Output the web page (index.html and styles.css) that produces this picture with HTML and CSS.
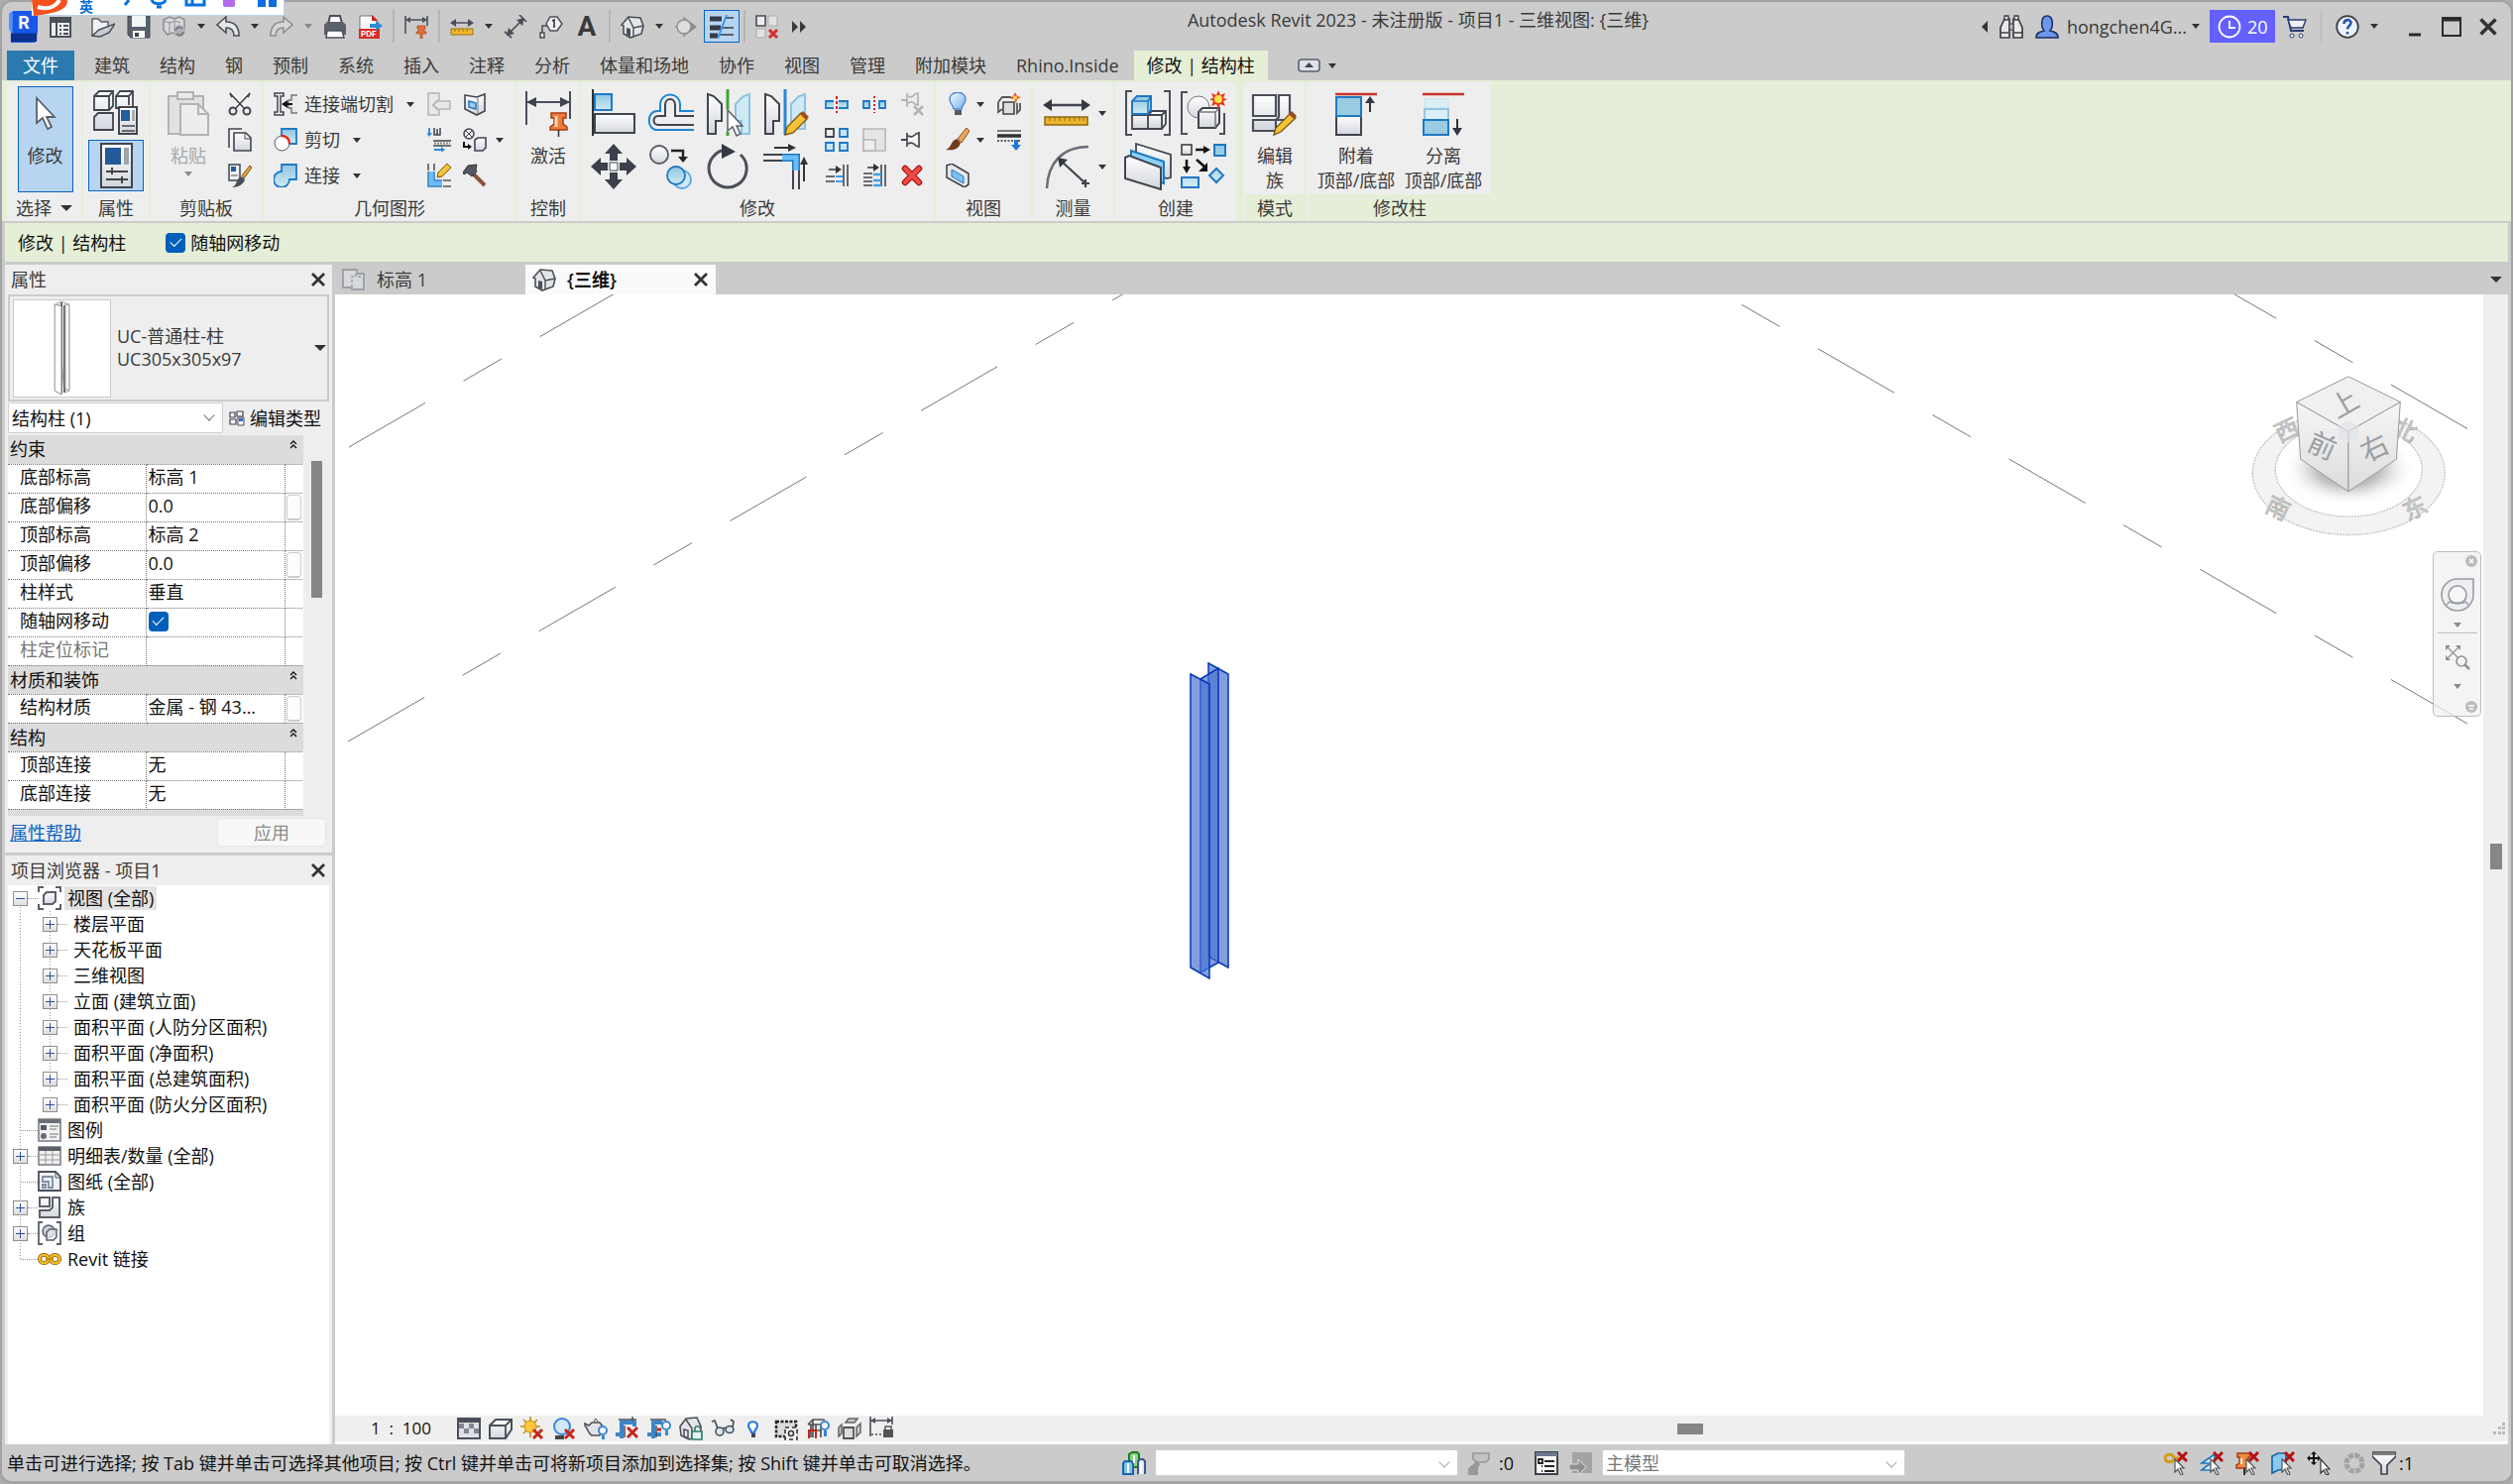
FILE: index.html
```html
<!DOCTYPE html>
<html lang="zh-CN">

<head>
  <meta charset="UTF-8" />
  <meta name="viewport" content="width=device-width, initial-scale=1.0" />
  <title>Autodesk Revit 2023</title>
  <link rel="stylesheet" href="styles.css">
</head>

<body>
  <!-- icon sprite -->
  <svg class="sprite" aria-hidden="true">
    <defs>
      <linearGradient id="gw" x1="0" y1="0" x2="0" y2="1"><stop offset="0" stop-color="#fff"/><stop offset="1" stop-color="#d3d6dd"/></linearGradient>
      <linearGradient id="gb" x1="0" y1="0" x2="0" y2="1"><stop offset="0" stop-color="#8fc6e0"/><stop offset="1" stop-color="#cfe9f5"/></linearGradient>
      <linearGradient id="gl" x1="0" y1="0" x2="1" y2="1"><stop offset="0" stop-color="#fff"/><stop offset="1" stop-color="#6db1ee"/></linearGradient>
    </defs>

    <symbol id="revit" viewBox="0 0 32 34"><path d="M0 3l5-3h26v22l-3 12H2l1-10-3-6z" fill="#1858e8"/><path d="M2 24h28v9H2z" fill="#0b2f8c"/><path d="M0 3l4-3v24l-4-5z" fill="#4f94ff"/></symbol>
    <symbol id="home-win" viewBox="0 0 24 24"><path d="M2 3h20v19H2z" fill="#eceef2" stroke="#4a4f59" stroke-width="2"/><path d="M2 3h20v5H2z" fill="#4a4f59"/><path d="M8 8v14M11 11h2M11 15h2M11 19h2M15 11h5M15 15h5M15 19h5" stroke="#4a4f59" stroke-width="2"/></symbol>
    <symbol id="open" viewBox="0 0 24 24"><path d="M1 21V4h6l3 3h7v4" fill="#f1f2f5" stroke="#5c616b" stroke-width="1.5"/><path d="M1 21l7-6 16-6-6 9-9 4z" fill="#c9ccd3" stroke="#4a4f59" stroke-width="1.5"/></symbol>
    <symbol id="save" viewBox="0 0 24 24"><path d="M1 1h22v22H4l-3-3z" fill="#5a606b" stroke="#3f444e"/><path d="M5 1h14v11H5z" fill="#f3f4f6"/><path d="M6 16h12v7H6z" fill="#fff"/><path d="M8 18h4v4H8z" fill="#3f444e"/></symbol>
    <symbol id="sync" viewBox="0 0 24 24"><path d="M1 5l6-3 5 2 5-2 5 3v9l-5 6-8-2-4 2-4-5z" fill="#d8d9dc" stroke="#8b8e94" stroke-width="1.5"/><path d="M7 7v12M1 6l6 2 6-2 5 2M12 6v9" stroke="#8b8e94" fill="none"/><circle cx="17" cy="16" r="6" fill="#b0b2b6"/><path d="M13 16a4 4 0 017-2M21 17a4 4 0 01-7 2" fill="none" stroke="#7c7f86" stroke-width="2"/></symbol>
    <symbol id="undo" viewBox="0 0 24 24"><path d="M1 10l9-8v5c8 0 13 4 13 14h-5c0-6-3-8-8-8v5z" fill="#e6e7ea" stroke="#4a4f59" stroke-width="1.6"/></symbol>
    <symbol id="redo" viewBox="0 0 24 24"><path d="M23 10l-9-8v5C6 7 1 11 1 21h5c0-6 3-8 8-8v5z" fill="#d6d6d6" stroke="#909090" stroke-width="1.6"/></symbol>
    <symbol id="print" viewBox="0 0 24 24"><path d="M5 9l2-8h10l2 8" fill="#fff" stroke="#4a4f59" stroke-width="2"/><path d="M1 10l3-3h16l3 3v10H1z" fill="#5b616c"/><path d="M4 16l-1 7h18l-2-7z" fill="#fff" stroke="#4a4f59" stroke-width="1.5"/></symbol>
    <symbol id="dim-pin" viewBox="0 0 24 24"><path d="M1 1v18M23 1v10M2 5h20" stroke="#4a4f59" stroke-width="1.6"/><path d="M1 5l5-3v6zM23 5l-5-3v6z" fill="#4a4f59"/><path d="M13 11h8v3h-1v3h2v2h-4v5h-2v-5h-4v-2h2v-3h-1z" fill="#e2703a" stroke="#a8421a" stroke-width=".7"/></symbol>
    <symbol id="ruler" viewBox="0 0 24 24"><path d="M4 8h16" stroke="#4a4f59" stroke-width="1.7"/><path d="M0 8l6-4v8zM24 8l-6-4v8z" fill="#4a4f59"/><path d="M1 14h22v6H1z" fill="#f0b82c" stroke="#9c7416"/><path d="M5 14v3M9 14v3M13 14v3M17 14v3" stroke="#9c7416"/></symbol>
    <symbol id="aligned" viewBox="0 0 24 24"><path d="M5 19L19 5M1 17l7 6M16 0l7 7" stroke="#4a4f59" stroke-width="1.7"/><path d="M3 21l2-8 6 6zM21 3l-8 2 6 6z" fill="#4a4f59"/></symbol>
    <symbol id="tag" viewBox="0 0 24 24"><path d="M3 19v-8h5" fill="none" stroke="#4a4f59" stroke-width="1.6"/><path d="M1 18h4v5H1zM11 2h7l5 7-5 7h-7L7 9z" fill="#f2f2f4" stroke="#4a4f59" stroke-width="1.5"/><path d="M13 6l2-1v8" fill="none" stroke="#333" stroke-width="1.6"/></symbol>
    <symbol id="house" viewBox="0 0 24 24"><path d="M1 10l7-8 12 1 3 8-2 8-11 4-7-4v-8z" fill="#e4e5e8" stroke="#4a4f59" stroke-width="1.6"/><path d="M8 3l5 10v9M13 13l10-2" fill="none" stroke="#4a4f59" stroke-width="1.4"/><path d="M6 13l4 1v8l-4-2z" fill="#4a4f59"/></symbol>
    <symbol id="section" viewBox="0 0 24 24"><path d="M11 3l12 9-12 9z" fill="#8b8b8b"/><circle cx="10" cy="12" r="7" fill="#dedede" stroke="#929292" stroke-width="1.500"/><path d="M10 2v4M10 18v4M1 12h3" stroke="#929292" stroke-width="1.500"/></symbol>
    <symbol id="thin" viewBox="0 0 24 24"><path d="M0 4h12M0 13h11M0 21h8" stroke="#363b45" stroke-width="5"/><path d="M15 3h9M13 13h11M9 20h15" stroke="#363b45" stroke-width="1.600"/><path d="M17 0L8 24" stroke="#3a96f0" stroke-width="2"/></symbol>
    <symbol id="close-hidden" viewBox="0 0 24 24"><path d="M1 1h9v10H1z" fill="#eee" stroke="#4a4f59" stroke-width="1.600"/><path d="M13 1h9v10h-9zM1 14h9v9H1z" fill="#e2e2e2" stroke="#aaa"/><path d="M14 15l8 8M22 15l-8 8" stroke="#d32f2f" stroke-width="3"/></symbol>
    <symbol id="more" viewBox="0 0 24 24"><path d="M5 6l6 6-6 6zM13 6l6 6-6 6z" fill="#3a3a3a"/></symbol>
    <symbol id="binoc" viewBox="0 0 24 24"><path d="M1 23V13l4-9h5v19zM23 23V13l-4-9h-5v19z" fill="#e9e9ea" stroke="#3d3f45" stroke-width="1.700"/><path d="M10 9h4v6h-4z" fill="#b7b8bc" stroke="#3d3f45"/><path d="M1 18h8M15 18h8M5 1h4v4H5zM15 1h4v4h-4z" fill="#ddd" stroke="#3d3f45" stroke-width="1.300"/></symbol>
    <symbol id="user" viewBox="0 0 24 24"><path d="M1 23c0-5 4-6 8-7-3-3-4-15 3-15s6 12 3 15c4 1 8 2 8 7z" fill="#6c97ea" stroke="#1d2f63" stroke-width="1.600"/></symbol>
    <symbol id="clock" viewBox="0 0 24 24"><circle cx="12" cy="12" r="10.500" fill="none" stroke="#fff" stroke-width="1.800"/><path d="M12 6v7h6" fill="none" stroke="#fff" stroke-width="1.800"/></symbol>
    <symbol id="cart" viewBox="0 0 24 24"><path d="M0 2h5l3 14h13" fill="none" stroke="#273a73" stroke-width="2"/><path d="M5 5h18l-3 8H8z" fill="#eef0f6" stroke="#273a73" stroke-width="1.400"/><circle cx="9" cy="21" r="2" fill="#fff" stroke="#273a73"/><circle cx="18" cy="21" r="2" fill="#fff" stroke="#273a73"/></symbol>
    <symbol id="help" viewBox="0 0 24 24"><circle cx="12" cy="12" r="10.800" fill="#eef2fa" stroke="#3d3f45" stroke-width="1.800"/><path d="M8.500 9c0-5 7-5 7-1 0 3-3.500 3-3.500 6.500M12 17v2.500" fill="none" stroke="#2456b8" stroke-width="2.600"/></symbol>
    <symbol id="x" viewBox="0 0 16 16"><path d="M2 2l12 12M14 2L2 14" stroke="#333" stroke-width="2.800"/></symbol>
    <symbol id="max" viewBox="0 0 20 20"><path d="M1 1h18v18H1z" fill="none" stroke="#2b2b2b" stroke-width="2"/><path d="M1 3h18" stroke="#2b2b2b" stroke-width="3"/></symbol>
    <symbol id="min" viewBox="0 0 20 20"><path d="M4 18h12" stroke="#2b2b2b" stroke-width="3"/></symbol>

    <!-- ribbon, large -->
    <symbol id="cursor" viewBox="0 0 48 48"><path d="M15 9v25l6-5 5 11 4-2-5-10h8z" fill="#fff" stroke="#5a6069" stroke-width="1.800"/></symbol>
    <symbol id="types" viewBox="0 0 48 48"><g fill="url(#gw)" stroke="#40454f" stroke-width="1.800"><path d="M2 7l5-5h14v15l-4 4H2zM24 7l4-5h13v17H24zM2 28l4-4h15v17H2z"/><path d="M2 7h15v14M17 7l4-5M24 7h13l4-5M37 7v9" fill="none"/><path d="M27 18h18v27H27z" stroke-width="2"/></g><path d="M29 21h9v11h-9z" fill="#245c9c"/><path d="M40 21h3v11h-3z" fill="#a9adb5"/><path d="M30 37h13M30 42h13" stroke="#444" stroke-width="1.500"/></symbol>
    <symbol id="props" viewBox="0 0 48 48"><path d="M9 2h31v44H9z" fill="url(#gw)" stroke="#40454f" stroke-width="2"/><path d="M13 6h16v17H13z" fill="#235a99"/><path d="M32 6h5v17h-5z" fill="#9ea3ac"/><path d="M14 30h22M14 38h22M20 26v7M30 35v7" stroke="#444" stroke-width="2"/></symbol>
    <symbol id="paste" viewBox="0 0 48 48"><path d="M4 7h35v38H4z" fill="#e1e1e1" stroke="#b3b3b3" stroke-width="2"/><path d="M13 3h16v7H13z" fill="#e8e8e8" stroke="#b3b3b3" stroke-width="2"/><path d="M16 15h18l10 10v21H16z" fill="#ededed" stroke="#b3b3b3" stroke-width="2"/><path d="M34 15v10h10" fill="none" stroke="#b3b3b3" stroke-width="2"/></symbol>
    <symbol id="activate" viewBox="0 0 48 48"><path d="M2 2v34M46 2v28M3 13h42" stroke="#4a4f59" stroke-width="2"/><path d="M2 13l10-5v10zM46 13l-10-5v10z" fill="#3d424d"/><path d="M27 24h15v5h-3v6l4 3v3H26v-3l4-3v-6h-3z" fill="#ef7d3c" stroke="#a63d12" stroke-width="1.500"/><path d="M32 27v11" stroke="#ffd9b8" stroke-width="3"/><path d="M34.500 41v7" stroke="#333" stroke-width="1.500"/></symbol>
    <symbol id="align" viewBox="0 0 48 48"><path d="M3 0v47" stroke="#333" stroke-width="2"/><path d="M5 5h17v16H5z" fill="url(#gb)" stroke="#1f78c4" stroke-width="2"/><path d="M5 25h40v19H5z" fill="url(#gw)" stroke="#40454f" stroke-width="2"/></symbol>
    <symbol id="offset" viewBox="0 0 48 48"><path d="M47 22H33v-6c0-14-20-14-20 0v6h-3C-1 22-1 41 10 41h37" fill="none" stroke="#1f86d4" stroke-width="2"/><path d="M47 27H28V16c0-8-10-8-10 0v11h-7c-6 0-6 9 0 9h36" fill="none" stroke="#40454f" stroke-width="2"/></symbol>
    <symbol id="mirror-pick" viewBox="0 0 48 48"><path d="M3 5l6 2 8 8v17h-6v13H3z" fill="url(#gw)" stroke="#40454f" stroke-width="2"/><path d="M45 5l-6 2-8 8v17h6v13h8z" fill="#cfe9f5" stroke="#8cc4e4" stroke-width="2"/><path d="M23 0v20M23 43v4" stroke="#3fa535" stroke-width="3"/><path d="M23 21v21l5-4 4 9 4-2-4-8h6z" fill="#fff" stroke="#5a6069" stroke-width="1.500"/></symbol>
    <symbol id="mirror-draw" viewBox="0 0 48 48"><path d="M3 5l6 2 8 8v17h-6v13H3z" fill="url(#gw)" stroke="#40454f" stroke-width="2"/><path d="M43 5l-6 2-8 8v17h6v8h8z" fill="#cfe9f5" stroke="#8cc4e4" stroke-width="2"/><path d="M23 0v46" stroke="#2a86dc" stroke-width="3"/><path d="M23 46l2-8 14-14 6 6-14 14z" fill="#f6c336" stroke="#7a5413" stroke-width="1.300"/><path d="M38 25l3-3 6 6-3 3z" fill="#9b4a23"/></symbol>
    <symbol id="move" viewBox="0 0 48 48"><path d="M24 1l9 10h-5v7h-8v-7h-5zM24 47l9-10h-5v-7h-8v7h-5zM1 24l10-9v5h7v8h-7v5zM47 24l-10-9v5h-7v8h7v5z" fill="#3b404b"/><path d="M20 20h8v8h-8z" fill="#fff" stroke="#3b404b"/></symbol>
    <symbol id="copy-lg" viewBox="0 0 48 48"><circle cx="12" cy="12" r="9" fill="url(#gw)" stroke="#555a64" stroke-width="1.800"/><path d="M24 8h12v8" fill="none" stroke="#222" stroke-width="2.500"/><path d="M31 14h10l-5 6z" fill="#222"/><circle cx="35" cy="37" r="9" fill="#cfe9f5" stroke="#5ba8dd" stroke-width="1.800"/><circle cx="29" cy="33" r="9" fill="url(#gb)" stroke="#1f78c4" stroke-width="1.800"/></symbol>
    <symbol id="rotate" viewBox="0 0 48 48"><path d="M36 12a19 19 0 11-13-5" fill="none" stroke="#4a4f59" stroke-width="3"/><path d="M17 1l14 8-14 7z" fill="#333843"/></symbol>
    <symbol id="trim" viewBox="0 0 48 48"><path d="M1 12h20M1 18h20M31 26v21M37 26v21" stroke="#40454f" stroke-width="2"/><path d="M20 15h14v13" fill="none" stroke="#1f78c4" stroke-width="8"/><path d="M20 15h14v13" fill="none" stroke="#6cbcf8" stroke-width="5"/><path d="M12 5h18M42 39V20" stroke="#333" stroke-width="2"/><path d="M26 1l8 4-8 4zM38 22l4-8 4 8z" fill="#333"/></symbol>
    <symbol id="measure" viewBox="0 0 48 48"><path d="M6 16h36" stroke="#40454f" stroke-width="2.500"/><path d="M0 16l9-6v12zM48 16l-9-6v12z" fill="#333843"/><path d="M2 28h43v8H2z" fill="#eeb42c" stroke="#8a6812" stroke-width="1.500"/><path d="M7 28v4M12 28v4M17 28v4M22 28v4M27 28v4M32 28v4M37 28v4M41 28v4" stroke="#8a6812"/></symbol>
    <symbol id="radius" viewBox="0 0 48 48"><path d="M4 46C5 20 20 4 46 4" fill="none" stroke="#6b6f78" stroke-width="2.500"/><path d="M18 18l25 23M43 37v8M39 41h8" stroke="#40454f" stroke-width="2.200"/><path d="M15 15l10 2-8 8z" fill="#333843"/></symbol>
    <symbol id="assembly" viewBox="0 0 48 48"><path d="M8 2H2v44h6M40 2h6v44h-6" fill="none" stroke="#4a4f59" stroke-width="2"/><g fill="url(#gw)" stroke="#40454f" stroke-width="1.800"><path d="M8 26h16v14H8zM24 26l4-4h14v13l-4 5H24z"/><path d="M24 26h14v14M38 26l4-4" fill="none"/></g><path d="M8 12l5-5h14v13l-3 5H8z" fill="url(#gb)" stroke="#1f78c4" stroke-width="2"/><path d="M8 12h16v13M24 12l3-5" fill="none" stroke="#1f78c4" stroke-width="1.500"/></symbol>
    <symbol id="group" viewBox="0 0 48 48"><path d="M8 3H2v42h6M40 45h5V24" fill="none" stroke="#4a4f59" stroke-width="2"/><circle cx="19" cy="18" r="11" fill="url(#gw)" stroke="#777"/><path d="M19 23l4-4h17v15l-4 5H19z" fill="url(#gw)" stroke="#40454f" stroke-width="2"/><path d="M19 23h17v16M36 23l4-4" fill="none" stroke="#777" stroke-width="1.500"/><path d="M39 1l2 5 5-2-2 5 4 1-4 2 2 5-5-2-2 5-2-5-5 2 2-5-4-2 4-1-2-5 5 2z" fill="#e5361c"/><circle cx="39" cy="10" r="4" fill="#ffe14a"/></symbol>
    <symbol id="parts" viewBox="0 0 48 48"><path d="M12 1l35 11v23l-4 1-31-12z" fill="url(#gw)" stroke="#40454f" stroke-width="1.800"/><path d="M7 8l33 11v22L7 29z" fill="#8fd0f5" stroke="#1f78c4" stroke-width="2"/><path d="M1 15l4-2 32 12v22L1 36z" fill="url(#gw)" stroke="#40454f" stroke-width="2"/></symbol>
    <symbol id="similar" viewBox="0 0 48 48"><path d="M2 2h10v10H2z" fill="url(#gw)" stroke="#333" stroke-width="1.500"/><g fill="url(#gb)" stroke="#1f78c4" stroke-width="2"><path d="M35 2h11v11H35zM2 35h17v10H2zM37 26l7 7-7 7-7-7z"/></g><path d="M16 7h9M7 17v8M17 17l8 7" stroke="#111" stroke-width="2.500"/><path d="M24 3l7 4-7 4zM3 24h8l-4 7zM28 20v9h-9z" fill="#111"/></symbol>
    <symbol id="edit-family" viewBox="0 0 48 48"><g fill="url(#gw)" stroke="#4a4f59" stroke-width="2.200"><path d="M2 6h23v21H2zM28 6h11v25H25l3-3zM2 31h23v11H2z"/></g><path d="M23 46l2-7 15-15 5 5-15 14z" fill="#f6c336" stroke="#7a5413" stroke-width="1.300"/><path d="M38 25l3-3 5 5-3 3z" fill="#9b4a23"/></symbol>
    <symbol id="attach" viewBox="0 0 48 48"><path d="M3 5h42" stroke="#c8332b" stroke-width="2.500"/><path d="M4 27h25v19H4z" fill="url(#gw)" stroke="#40454f" stroke-width="2"/><path d="M4 8h25v19H4z" fill="#99cbe2" stroke="#1f78c4" stroke-width="2"/><path d="M38 23V12" stroke="#333" stroke-width="2"/><path d="M33 14l5-7 5 7z" fill="#333843"/></symbol>
    <symbol id="detach" viewBox="0 0 48 48"><path d="M3 5h42" stroke="#c8332b" stroke-width="2.500"/><path d="M5 10h24v9H5z" fill="#dceff7" stroke="#c3e1ef"/><path d="M5 20h24v11H5z" fill="#dceff7" stroke="#7db9dd" stroke-width="1.500"/><path d="M4 31h25v15H4z" fill="#99cbe2" stroke="#1f78c4" stroke-width="2"/><path d="M38 30v10" stroke="#333" stroke-width="2"/><path d="M33 39l5 8 5-8z" fill="#333843"/></symbol>

    <!-- ribbon, small -->
    <symbol id="cut" viewBox="0 0 24 24"><path d="M3 1l13 15M21 1L8 16" stroke="#fff" stroke-width="4"/><path d="M2 1l14 15M22 1L8 16M2 1l2 4M22 1l-2 4" stroke="#40454f" stroke-width="1.800"/><circle cx="5" cy="19" r="3.500" fill="none" stroke="#40454f" stroke-width="2"/><circle cx="19" cy="19" r="3.500" fill="none" stroke="#40454f" stroke-width="2"/></symbol>
    <symbol id="copy" viewBox="0 0 24 24"><path d="M1 20V1h13" fill="#f3f3f3" stroke="#40454f" stroke-width="1.600"/><path d="M6 5h12l5 5v13H6z" fill="url(#gw)" stroke="#40454f" stroke-width="1.600"/><path d="M17 5v6h6" fill="none" stroke="#40454f"/></symbol>
    <symbol id="match" viewBox="0 0 24 24"><path d="M1 1h11v16H1z" fill="#eef0f3" stroke="#40454f" stroke-width="1.500"/><path d="M3 3h5v5H3z" fill="#245c9c"/><path d="M3 12h7" stroke="#555"/><path d="M14 12L22 2l2 2-8 11z" fill="#e3a437" stroke="#7a5413"/><path d="M2 24c8 0 5-8 11-11l4 3c-1 5-8 9-15 8z" fill="#4a4f59"/></symbol>
    <symbol id="cope" viewBox="0 0 24 24"><path d="M1 1h9v3H7v16h3v3H1v-3h3V4H1z" fill="#f5f5f5" stroke="#40454f" stroke-width="1.500"/><path d="M24 3h-6v5h-3v8h3v5h6" fill="#e9eaed" stroke="#777" stroke-width="1.500"/><path d="M11 12h8" stroke="#111" stroke-width="2"/><path d="M8 12l6-4v8z" fill="#111"/></symbol>
    <symbol id="cutgeo" viewBox="0 0 24 24"><path d="M8 1h15v15H8z" fill="url(#gb)" stroke="#1f78c4" stroke-width="1.800"/><circle cx="8.500" cy="15.500" r="7.500" fill="#fff" stroke="#555"/><path d="M8 8a7.500 7.500 0 018 8" fill="none" stroke="#e52620" stroke-width="2.400"/></symbol>
    <symbol id="joingeo" viewBox="0 0 24 24"><path d="M8 1h15v15h-7a8 8 0 11-8-8z" fill="url(#gb)" stroke="#1f78c4" stroke-width="1.800"/></symbol>
    <symbol id="split-g" viewBox="0 0 24 24"><path d="M1 1h11v8h11v8H12v6H1z" fill="#e8e8e8" stroke="#b5b5b5" stroke-width="1.500"/><path d="M11 8l-5 5 5 5" fill="none" stroke="#b5b5b5" stroke-width="2"/></symbol>
    <symbol id="walljoin" viewBox="0 0 24 24"><path d="M2 3l12 2 8-3v17l-8 4-12-6z" fill="url(#gw)" stroke="#40454f" stroke-width="1.600"/><path d="M6 9l7 2v6l-7-2z" fill="#9cd0ec" stroke="#1f78c4" stroke-width="1.500"/><path d="M15 6v16" stroke="#777"/></symbol>
    <symbol id="beam" viewBox="0 0 24 24"><path d="M6 13h18M6 18h18" stroke="#40454f" stroke-width="1.600"/><path d="M2 0v6M7 22h8" stroke="#2a8be0" stroke-width="1.800"/><path d="M-1 5l3 4 3-4zM14 19l4 3-4 3z" fill="#2a8be0"/><path d="M7 0v7h6V0M10 1v6" fill="none" stroke="#40454f" stroke-width="1.500"/><path d="M7 15.500h16" stroke="#888" stroke-width="2" stroke-dasharray="2 1"/></symbol>
    <symbol id="void" viewBox="0 0 24 24"><circle cx="6" cy="6" r="5" fill="#eee" stroke="#40454f" stroke-width="1.500"/><path d="M3 3l6 6M9 3L3 9" stroke="#40454f"/><path d="M12 12l3-2h8v10l-3 3h-8z" fill="url(#gw)" stroke="#40454f" stroke-width="1.600"/><path d="M1 14v5h4" fill="none" stroke="#111" stroke-width="2"/><path d="M5 16l4 3-4 3z" fill="#111"/></symbol>
    <symbol id="wall-edit" viewBox="0 0 24 24"><path d="M1 8v15h14M7 8v9h8" fill="none" stroke="#1f78c4" stroke-width="1.500"/><path d="M4 8v12h11" fill="none" stroke="#6cbcf8" stroke-width="4"/><path d="M1 0v7M7 0v7M16 17h8M16 23h8" stroke="#555" stroke-width="1.600"/><path d="M10 14l1-5 9-9 4 4-9 9z" fill="#f6c336" stroke="#7a5413"/></symbol>
    <symbol id="hammer" viewBox="0 0 24 24"><path d="M9 9l13 13" stroke="#8a5442" stroke-width="4"/><path d="M0 9l5-7 9-1-1 5 1 2-5 5-5-4-3 2z" fill="#525761" stroke="#333" stroke-width="1"/></symbol>
    <symbol id="split" viewBox="0 0 24 24"><path d="M1 9h22v7H1z" fill="url(#gb)" stroke="#1f78c4" stroke-width="1.800"/><path d="M9 8h5v9H9z" fill="#eee"/><path d="M12 4v17" stroke="#d3231b" stroke-width="2" stroke-dasharray="3 2"/></symbol>
    <symbol id="split-gap" viewBox="0 0 24 24"><path d="M1 9h6v7H1zM17 9h6v7h-6z" fill="url(#gb)" stroke="#1f78c4" stroke-width="1.800"/><path d="M12 4v17" stroke="#d3231b" stroke-width="2" stroke-dasharray="2 2"/></symbol>
    <symbol id="unpin" viewBox="0 0 24 24"><path d="M1 8h6" stroke="#b3b3b3" stroke-width="1.800"/><path d="M7 1v14M8 4c4 2 5 0 7-2l3-1v12l-3-1c-2-2-3-3-7-1" fill="none" stroke="#b3b3b3" stroke-width="1.700"/><path d="M14 14l9 9M23 14l-9 9" stroke="#b3b3b3" stroke-width="2.500"/></symbol>
    <symbol id="array" viewBox="0 0 24 24"><path d="M1 1h8v8H1z" fill="#eee" stroke="#40454f" stroke-width="1.800"/><path d="M15 1h8v8h-8zM1 15h8v8H1zM15 15h8v8h-8z" fill="#cbe6f3" stroke="#1f78c4" stroke-width="1.800"/></symbol>
    <symbol id="scale" viewBox="0 0 24 24"><path d="M1 1h22v22H1z" fill="#e5e5e5" stroke="#b7b7b7" stroke-width="1.600"/><path d="M1 12h12v11H1z" fill="#eee" stroke="#b7b7b7" stroke-width="1.600"/></symbol>
    <symbol id="pin" viewBox="0 0 24 24"><path d="M1 12h6" stroke="#40454f" stroke-width="1.800"/><path d="M7 5v14M8 8c4 2 6 0 8-2l3-1v14l-3-1c-2-2-4-4-8-2" fill="#f4f4f4" stroke="#40454f" stroke-width="1.700"/></symbol>
    <symbol id="trim1" viewBox="0 0 24 24"><path d="M1 13h9M1 18h9M19 1v22M23 1v22" stroke="#40454f" stroke-width="1.600"/><path d="M11 13h7M11 18h7" stroke="#3ba0f0" stroke-width="2"/><path d="M4 6h8" stroke="#333" stroke-width="1.500"/><path d="M11 2l6 4-6 4z" fill="#333"/></symbol>
    <symbol id="trim2" viewBox="0 0 24 24"><path d="M1 10h9M1 14h9M1 18h9M1 22h9M19 1v22M23 1v22" stroke="#40454f" stroke-width="1.600"/><path d="M11 11h8M11 17h8M11 22h8" stroke="#3ba0f0" stroke-width="2.500"/><path d="M5 4h6" stroke="#333" stroke-width="1.500"/><path d="M11 0l6 4-6 4z" fill="#333"/></symbol>
    <symbol id="delete" viewBox="0 0 24 24"><path d="M5 5l14 14M19 5L5 19" stroke="#a91717" stroke-width="6.500" stroke-linecap="round"/><path d="M5 5l14 14M19 5L5 19" stroke="#ee4b45" stroke-width="4" stroke-linecap="round"/></symbol>
    <symbol id="bulb" viewBox="0 0 24 24"><path d="M8 17c0-4-4-5-4-10C4-2 20-2 20 7c0 5-4 6-4 10z" fill="url(#gl)" stroke="#4f84cf" stroke-width="1.400"/><path d="M9 18h7v5H9z" fill="#555b66"/></symbol>
    <symbol id="displace" viewBox="0 0 24 24"><path d="M6 10h11v12H6z" fill="#ddd" stroke="#444" stroke-width="1.600"/><path d="M1 10l4-5h9M1 10v10l4-3M20 11v10l3-3v-7" fill="none" stroke="#555" stroke-width="1.800"/><path d="M18 0l2 4 4 1-4 2-1 4-2-4-5-1 4-2z" fill="#f04a1c"/><circle cx="18" cy="5.500" r="2" fill="#ffe14a"/></symbol>
    <symbol id="brush" viewBox="0 0 24 24"><path d="M12 11l9-11 3 3-8 12z" fill="#e8a75a" stroke="#8a4f1f"/><path d="M0 22c6-2 5-9 11-11l4 4c-2 7-8 8-15 7z" fill="#713a1a"/></symbol>
    <symbol id="linework" viewBox="0 0 24 24"><path d="M0 3h24" stroke="#555" stroke-width="1.500"/><path d="M0 8h24" stroke="#333" stroke-width="3.500"/><path d="M0 13h24" stroke="#333" stroke-width="1.500" stroke-dasharray="2 1.500"/><path d="M17 12h4v5h3l-5 6-5-6h3z" fill="#1f78d4"/></symbol>
    <symbol id="selbox" viewBox="0 0 24 24"><path d="M1 2l5-2 17 10v11l-4 3L1 14z" fill="#e7e7e9" stroke="#40454f" stroke-width="1.600"/><path d="M6 6l12 7v7L6 13z" fill="#7bc1f2" stroke="#1f78c4"/></symbol>
    <symbol id="ribbon-min" viewBox="0 0 24 16"><rect x="1" y="2" width="21" height="12" rx="3" fill="#dfe1e8" stroke="#5b5f69" stroke-width="1.600"/><path d="M7 10l4.500-5 4.500 5z" fill="#40454f"/></symbol>

    <!-- palettes -->
    <symbol id="edit-type" viewBox="0 0 16 16"><path d="M1 2h5v5H1zM8 1h6v5H8zM1 9h6v5H1z" fill="#f5f5f7" stroke="#40454f" stroke-width="1.200"/><path d="M9 7h6v8H9z" fill="#fff" stroke="#40454f"/><path d="M10 8h4v3h-4z" fill="#2f72bd"/></symbol>
    <symbol id="thumb-col" viewBox="0 0 20 98"><path d="M4 3l5-2 8 3v89l-5 2z" fill="#ededed" stroke="#aaa"/><path d="M9 2v94M12 5v90" stroke="#666" stroke-width="2"/><path d="M2 4l7 2v91l-7-4z" fill="#fff" stroke="#888"/><path d="M13 4l4 1v88l-4-2z" fill="#fff" stroke="#999"/></symbol>
    <symbol id="collapse" viewBox="0 0 8 10"><path d="M1 5l3-3 3 3M1 9l3-3 3 3" fill="none" stroke="#111" stroke-width="1.300"/></symbol>
    <symbol id="t-views" viewBox="0 0 24 24"><path d="M1 6V1h5M18 1h5v5M23 18v5h-5M6 23H1v-5" fill="none" stroke="#5b5f69" stroke-width="2"/><path d="M6 9l3-3h9v9l-3 3H6z" fill="url(#gw)" stroke="#5b5f69" stroke-width="2"/></symbol>
    <symbol id="t-legend" viewBox="0 0 24 24"><path d="M1 1h22v22H1z" fill="#f1f1f3" stroke="#777b84" stroke-width="1.600"/><path d="M1 1h22v4H1z" fill="#6c7079"/><path d="M3 7h6v5H3z" fill="#555a66"/><circle cx="6" cy="18" r="3" fill="#666b76"/><path d="M12 8h9M12 11h7M12 16h9M12 19h7" stroke="#777"/></symbol>
    <symbol id="t-sched" viewBox="0 0 24 24"><path d="M1 3h22v18H1z" fill="#f1f1f3" stroke="#777b84" stroke-width="1.500"/><path d="M1 3h22v4H1z" fill="#5b5f69"/><path d="M1 11h22M1 16h22M8 7v14M15 7v14" stroke="#999"/></symbol>
    <symbol id="t-sheet" viewBox="0 0 24 24"><path d="M1 2h17l5 5v14H1z" fill="#eef0f3" stroke="#4a4f59" stroke-width="1.800"/><path d="M5 7h10v11h-4v-6H5zM5 15h3v3H5z" fill="none" stroke="#7c8fa5" stroke-width="1.800"/><path d="M18 2v6h5" fill="none" stroke="#4a4f59"/></symbol>
    <symbol id="t-family" viewBox="0 0 24 24"><path d="M2 2h10v9H2zM15 2h7v20H2v-7h10l3-3z" fill="url(#gw)" stroke="#5b5f69" stroke-width="2"/></symbol>
    <symbol id="t-group" viewBox="0 0 24 24"><path d="M5 1H1v22h4M19 1h4v22h-4" fill="none" stroke="#5b5f69" stroke-width="1.800"/><circle cx="11" cy="10" r="6" fill="#cdd3dd" stroke="#5b5f69" stroke-width="1.500"/><path d="M9 11l3-3h7v8l-3 3H9z" fill="#e3e6ee" fill-opacity=".8" stroke="#5b5f69" stroke-width="1.500"/></symbol>
    <symbol id="t-link" viewBox="0 0 24 24"><rect x="2" y="8" width="9" height="8" rx="4" fill="none" stroke="#8a6208" stroke-width="4"/><rect x="13" y="8" width="9" height="8" rx="4" fill="none" stroke="#8a6208" stroke-width="4"/><rect x="2" y="8" width="9" height="8" rx="4" fill="none" stroke="#f2bd2c" stroke-width="2.400"/><rect x="13" y="8" width="9" height="8" rx="4" fill="none" stroke="#f2bd2c" stroke-width="2.400"/><path d="M8 12h8" stroke="#c48c12" stroke-width="2.500"/></symbol>
    <symbol id="plan" viewBox="0 0 24 24"><path d="M1 2h14v4h7v16H10v-2H1z" fill="#d6d8dc" stroke="#9a9ea6" stroke-width="1.800"/><path d="M10 20V9h4V6M16 9h6" fill="none" stroke="#9a9ea6" stroke-width="1.500" stroke-dasharray="3 2"/></symbol>

    <!-- view control bar -->
    <symbol id="v-detail" viewBox="0 0 24 24"><path d="M1 2h22v20H1z" fill="#dfe1e5" stroke="#4a4f59" stroke-width="2"/><path d="M1 2h22v4H1z" fill="#4a4f59"/><path d="M2 7h5v5H2zM12 7h5v5h-5zM7 12h5v5H7zM17 12h5v5h-5z" fill="#82868f"/></symbol>
    <symbol id="v-style" viewBox="0 0 24 24"><path d="M1 9l6-6h16v10l-6 9H1z" fill="url(#gw)" stroke="#4a4f59" stroke-width="2"/><path d="M1 9h16v13M17 9l6-6" fill="none" stroke="#4a4f59" stroke-width="1.800"/></symbol>
    <symbol id="v-sun" viewBox="0 0 24 24"><path d="M10 0v21M0 10h20M3 3l14 14M17 3L3 17" stroke="#c98a12" stroke-width="1.600"/><circle cx="10" cy="10" r="6" fill="#ffc83a" stroke="#c98a12"/><path d="M13 13l9 9M22 13l-9 9" stroke="#c5261d" stroke-width="3"/></symbol>
    <symbol id="v-shadow" viewBox="0 0 24 24"><circle cx="10" cy="10" r="8" fill="#cfe6fb" stroke="#3a86d8" stroke-width="2"/><path d="M3 21h9" stroke="#444" stroke-width="4"/><path d="M13 13l9 9M22 13l-9 9" stroke="#c5261d" stroke-width="3"/></symbol>
    <symbol id="v-render" viewBox="0 0 24 24"><path d="M1 7l4 2 3-3h8l3 4-3 9H8C4 17 4 12 1 9z" fill="#e1e3e6" stroke="#4a4f59" stroke-width="1.600"/><path d="M10 5l2-3 2 3" stroke="#4a4f59" fill="none"/><circle cx="19" cy="14" r="4" fill="#fff" stroke="#3a86d8" stroke-width="2"/><path d="M18 19h3v4h-3z" fill="#3a86d8"/></symbol>
    <symbol id="v-crop" viewBox="0 0 24 24"><path d="M6 22V6h13v4M0 18h8" fill="none" stroke="#3a86c8" stroke-width="4"/><path d="M3 3h18M9 9v12M17 0v4" stroke="#4a4f59" stroke-width="1.500"/><path d="M12 11l10 10M22 11L12 21" stroke="#c5261d" stroke-width="3"/></symbol>
    <symbol id="v-cropshow" viewBox="0 0 24 24"><path d="M6 22V6h9M0 18h14" fill="none" stroke="#3a86c8" stroke-width="4"/><path d="M3 3h16M9 9v12" stroke="#4a4f59" stroke-width="1.500"/><circle cx="19" cy="9" r="4" fill="#fff" stroke="#3a86d8" stroke-width="2"/><path d="M18 14h3v5h-3z" fill="#3a86d8"/><path d="M10 13h4" stroke="#c5261d" stroke-width="3"/></symbol>
    <symbol id="v-lock" viewBox="0 0 24 24"><path d="M1 10l6-8 11-1 4 9v9l-12 4-8-4z" fill="#e4e5e8" stroke="#4a4f59" stroke-width="1.600"/><path d="M7 3l6 9v10M5 13l4 1v8l-4-2z" fill="none" stroke="#4a4f59" stroke-width="1.500"/><path d="M13 15h10v8H13z" fill="#e5f5ef" stroke="#2e7e6c" stroke-width="1.600"/><path d="M16 15v-3c0-3 5-3 5 0" fill="none" stroke="#2e7e6c" stroke-width="1.600"/></symbol>
    <symbol id="v-glasses" viewBox="0 0 24 24"><path d="M1 5l3-1 3 8M20 3l3 2-1 6M12 13c1-2 2-2 3-1" fill="none" stroke="#4a4f59" stroke-width="1.700"/><ellipse cx="9" cy="15" rx="4" ry="4" fill="#cfeaf2" stroke="#4a4f59" stroke-width="1.600"/><ellipse cx="19" cy="13" rx="4" ry="3.500" fill="#cfeaf2" stroke="#4a4f59" stroke-width="1.600"/></symbol>
    <symbol id="v-bulb" viewBox="0 0 24 24"><path d="M9 16c0-3-3-3-3-7 0-5 9-5 9 0 0 4-3 4-3 7z" fill="#fff" stroke="#2a7be0" stroke-width="2.200"/><path d="M9 17h4v4H9z" fill="#445"/></symbol>
    <symbol id="v-reveal" viewBox="0 0 24 24"><path d="M2 5h20v15H2z" fill="#dcdcdc" stroke="#222" stroke-width="2.500" stroke-dasharray="3 1.500"/><path d="M11 11h12v12H11z" fill="#f2f2f2" stroke="#333" stroke-width="1.600" stroke-dasharray="4 3"/><circle cx="17" cy="17" r="2.500" fill="#fff" stroke="#333" stroke-width="1.500"/></symbol>
    <symbol id="v-analytic" viewBox="0 0 24 24"><path d="M2 8l5-5h12M2 8h14M5 8v13M10 8v13M15 8v13M2 14h14M7 3v18" fill="none" stroke="#555" stroke-width="1.700"/><path d="M3 22v-8h7v8" fill="none" stroke="#c5261d" stroke-width="2"/><circle cx="19" cy="9" r="4" fill="#fff" stroke="#3a86d8" stroke-width="2"/><path d="M18 14h3v6h-3z" fill="#3a86d8"/></symbol>
    <symbol id="v-displace" viewBox="0 0 24 24"><path d="M6 11h10v11H6z" fill="#ddd" stroke="#555" stroke-width="1.800"/><path d="M8 6l3-4h9l-3 4zM1 11l3-3v9l-3 3zM19 11l4-4v9l-4 4z" fill="#c9c9cb" stroke="#666" stroke-width="1.500"/></symbol>
    <symbol id="v-constraint" viewBox="0 0 24 24"><path d="M1 0v20M23 0v8M1 4h22" stroke="#4a4f59" stroke-width="1.600"/><path d="M1 4l5-3v6zM23 4l-5-3v6z" fill="#4a4f59"/><path d="M2 18h11" stroke="#777" stroke-dasharray="2 2" stroke-width="2"/><path d="M14 13h10v8H14z" fill="#555"/><path d="M16 13v-3h6v3" fill="none" stroke="#555" stroke-width="1.500"/></symbol>

    <!-- status bar -->
    <symbol id="s-worksets" viewBox="0 0 24 24"><path d="M7 16V3l3-2h5l2 2v13z" fill="#8fd08a" stroke="#1d7a1d" stroke-width="2"/><path d="M1 23V12l2-2h6l2 2v11z" fill="#7fc0ee" stroke="#1468b0" stroke-width="2"/><path d="M16 23V10l2-2h3l2 2v13" fill="#dfe5f0" stroke="#3d5a8c" stroke-width="2"/><path d="M12 4v8M6 12v10M19 11v12" stroke="#fff" stroke-width="2"/></symbol>
    <symbol id="s-edit" viewBox="0 0 24 24"><path d="M6 2h16v6l-3 3h-9L6 8z" fill="#c2c2c2" stroke="#999" stroke-width="1.600"/><path d="M1 24v-7l5-4 3-3 4 3-2 4v7z" fill="#999"/></symbol>
    <symbol id="s-options" viewBox="0 0 24 24"><path d="M1 1h22v22H1z" fill="#fafafa" stroke="#3c4250" stroke-width="2"/><path d="M1 1h22v4H1z" fill="#6e7690"/><path d="M4 8h4v4H4zM10 10h10M10 15h10M10 20h10M7 15h1M7 20h1" fill="none" stroke="#222" stroke-width="1.800"/></symbol>
    <symbol id="s-into" viewBox="0 0 24 24"><path d="M3 1h20v21H3z" fill="#a3a3a3"/><path d="M0 13h9V8l8 8-8 8v-5H0z" fill="#8f8f8f" stroke="#ddd"/></symbol>
    <symbol id="s-x" viewBox="0 0 24 24"><path d="M14 1l9 9M23 1l-9 9" stroke="#b51212" stroke-width="3"/><path d="M11 8v13l3-3 3 6 2-1-3-6h4z" fill="#fff" stroke="#555" stroke-width="1.200"/></symbol>
    <symbol id="s-link" viewBox="0 0 24 24"><path d="M1 7c0-5 9-5 9 0s-9 5-9 0zM10 7h10" fill="none" stroke="#d29b18" stroke-width="3"/><use href="#s-x"/></symbol>
    <symbol id="s-under" viewBox="0 0 24 24"><path d="M2 12L15 3v9zM2 19l6-5h8v5z" fill="#dff0fa" stroke="#1f78c4" stroke-width="1.700"/><use href="#s-x"/></symbol>
    <symbol id="s-pinned" viewBox="0 0 24 24"><path d="M2 2h13v4h-2v6l3 2v3H1v-3l3-2V6H2z" fill="#ef8a43" stroke="#a63d12" stroke-width="1.500"/><path d="M6 7v6" stroke="#ffe2c4" stroke-width="2.500"/><path d="M9 17v7" stroke="#333" stroke-width="2"/><use href="#s-x"/></symbol>
    <symbol id="s-face" viewBox="0 0 24 24"><path d="M1 5l6-3h8v16l-8 1-6 3z" fill="#8cc9ee" stroke="#1468b0" stroke-width="1.700"/><use href="#s-x"/></symbol>
    <symbol id="s-drag" viewBox="0 0 24 24"><path d="M7 1v12M1 7h12" stroke="#111" stroke-width="2"/><path d="M7 0l3 3H4zM7 14l3-3H4zM0 7l3-3v6zM14 7l-3-3v6z" fill="#111"/><path d="M14 8v14l3-3 3 5 2-1-3-5h4z" fill="#fff" stroke="#333" stroke-width="1.200"/></symbol>
    <symbol id="s-gear" viewBox="0 0 24 24"><circle cx="12" cy="12" r="8" fill="none" stroke="#a2a2a2" stroke-width="5" stroke-dasharray="5 1.280"/></symbol>
    <symbol id="s-filter" viewBox="0 0 24 24"><path d="M0 1h24v4l-9 9v9H9v-9L0 5z" fill="url(#gw)" stroke="#40454f" stroke-width="1.700"/><path d="M1 3h22" stroke="#555" stroke-width="1.500"/></symbol>
  </svg>

  <div class="app">
    <header class="titlebar">
      <nav class="qat">
        <button class="logo" aria-label="Revit"><svg><use href="#revit"/></svg><span>R</span></button>
        <button class="tool home" aria-label="主页"><svg class="ic"><use href="#home-win"/></svg></button>
        <button class="tool" aria-label="打开"><svg class="ic"><use href="#open"/></svg></button>
        <button class="tool" aria-label="保存"><svg class="ic"><use href="#save"/></svg></button>
        <button class="tool" aria-label="同步"><svg class="ic"><use href="#sync"/></svg></button>
        <i class="caret"></i>
        <button class="tool" aria-label="放弃"><svg class="ic"><use href="#undo"/></svg></button>
        <i class="caret"></i>
        <button class="tool" aria-label="重做"><svg class="ic"><use href="#redo"/></svg></button>
        <i class="caret dim"></i>
        <button class="tool" aria-label="打印"><svg class="ic"><use href="#print"/></svg></button>
        <button class="tool" aria-label="导出"><svg class="ic" viewBox="0 0 24 24"><path d="M1 1h13l5 5v17H1z" fill="#fafafa" stroke="#777"/><path d="M13 0v6h6z" fill="#d3231b"/><path d="M0 14h21v10H0z" fill="#d92b22"/><text class="pdf" x="2" y="22">PDF</text><path d="M11 9h6V6l7 5-7 5v-3h-6z" fill="#2e8bd3"/></svg></button>
        <i class="sep"></i>
        <button class="tool" aria-label="控制"><svg class="ic"><use href="#dim-pin"/></svg></button>
        <i class="sep"></i>
        <button class="tool" aria-label="测量"><svg class="ic"><use href="#ruler"/></svg></button>
        <i class="caret"></i>
        <button class="tool" aria-label="对齐标注"><svg class="ic"><use href="#aligned"/></svg></button>
        <button class="tool" aria-label="标记"><svg class="ic"><use href="#tag"/></svg></button>
        <button class="tool letter">A</button>
        <i class="sep"></i>
        <button class="tool" aria-label="三维"><svg class="ic"><use href="#house"/></svg></button>
        <i class="caret"></i>
        <button class="tool" aria-label="剖面"><svg class="ic"><use href="#section"/></svg></button>
        <button class="tool pressed" aria-label="细线"><svg class="ic"><use href="#thin"/></svg></button>
        <i class="sep"></i>
        <button class="tool" aria-label="关闭非活动视图"><svg class="ic"><use href="#close-hidden"/></svg></button>
        <button class="tool more" aria-label="更多"><svg class="ic"><use href="#more"/></svg></button>
      </nav>
      <h1 class="title">Autodesk Revit 2023 - 未注册版 - 项目1 - 三维视图: {三维}</h1>
      <div class="account">
        <i class="caret left"></i>
        <button class="tool" aria-label="搜索"><svg class="ic"><use href="#binoc"/></svg></button>
        <button class="tool" aria-label="用户"><svg class="ic"><use href="#user"/></svg></button>
        <span class="user-name">hongchen4G...</span>
        <i class="caret"></i>
        <button class="trial"><svg class="ic"><use href="#clock"/></svg>20</button>
        <button class="tool" aria-label="商店"><svg class="ic"><use href="#cart"/></svg></button>
        <i class="sep wide"></i>
        <button class="tool" aria-label="帮助"><svg class="ic"><use href="#help"/></svg></button>
        <i class="caret"></i>
        <div class="window-buttons">
          <button aria-label="最小化"><svg class="ic20"><use href="#min"/></svg></button>
          <button aria-label="最大化"><svg class="ic20"><use href="#max"/></svg></button>
          <button aria-label="关闭"><svg class="ic20"><use href="#x"/></svg></button>
        </div>
      </div>
    </header>

    <nav class="tabs">
      <a class="file" href="#">文件</a>
      <a href="#">建筑</a>
      <a href="#">结构</a>
      <a href="#">钢</a>
      <a href="#">预制</a>
      <a href="#">系统</a>
      <a href="#">插入</a>
      <a href="#">注释</a>
      <a href="#">分析</a>
      <a href="#">体量和场地</a>
      <a href="#">协作</a>
      <a href="#">视图</a>
      <a href="#">管理</a>
      <a href="#">附加模块</a>
      <a href="#">Rhino.Inside</a>
      <a class="active" href="#">修改 | 结构柱</a>
      <button class="ribbon-state" aria-label="最小化功能区"><svg><use href="#ribbon-min"/></svg><i class="caret"></i></button>
    </nav>

    <section class="ribbon">
      <div class="panel p-select">
        <div class="body">
          <button class="big pressed"><svg class="lg"><use href="#cursor"/></svg>修改</button>
        </div>
        <h2>选择 <i class="caret large"></i></h2>
      </div>
      <div class="panel p-props">
        <div class="body">
          <button aria-label="类型属性"><svg class="lg"><use href="#types"/></svg></button>
          <button class="pressed" aria-label="属性"><svg class="lg"><use href="#props"/></svg></button>
        </div>
        <h2>属性</h2>
      </div>
      <div class="panel p-clip">
        <div class="body">
          <button class="big" disabled><svg class="lg"><use href="#paste"/></svg>粘贴<i class="caret dim"></i></button>
          <div class="stack">
            <button aria-label="剪切"><svg class="ic"><use href="#cut"/></svg></button>
            <button aria-label="复制"><svg class="ic"><use href="#copy"/></svg></button>
            <button aria-label="匹配类型"><svg class="ic"><use href="#match"/></svg></button>
          </div>
        </div>
        <h2>剪贴板</h2>
      </div>
      <div class="panel p-geo">
        <div class="body">
          <div class="stack named">
            <button><svg class="ic"><use href="#cope"/></svg>连接端切割<i class="caret"></i></button>
            <button><svg class="ic"><use href="#cutgeo"/></svg>剪切<i class="caret"></i></button>
            <button><svg class="ic"><use href="#joingeo"/></svg>连接<i class="caret"></i></button>
          </div>
          <div class="stack">
            <button aria-label="拆分面"><svg class="ic"><use href="#split-g"/></svg></button>
            <button aria-label="梁连接"><svg class="ic"><use href="#beam"/></svg></button>
            <button aria-label="墙连接"><svg class="ic"><use href="#wall-edit"/></svg></button>
          </div>
          <div class="stack">
            <button aria-label="墙洞口"><svg class="ic"><use href="#walljoin"/></svg></button>
            <button aria-label="填色"><svg class="ic"><use href="#void"/></svg><i class="caret"></i></button>
            <button aria-label="拆除"><svg class="ic"><use href="#hammer"/></svg></button>
          </div>
        </div>
        <h2>几何图形</h2>
      </div>
      <div class="panel p-ctrl">
        <div class="body">
          <button class="big"><svg class="lg"><use href="#activate"/></svg>激活</button>
        </div>
        <h2>控制</h2>
      </div>
      <div class="panel p-modify">
        <div class="body">
          <div class="large-grid four">
            <button aria-label="对齐"><svg class="lg"><use href="#align"/></svg></button>
            <button aria-label="偏移"><svg class="lg"><use href="#offset"/></svg></button>
            <button aria-label="镜像 - 拾取轴"><svg class="lg"><use href="#mirror-pick"/></svg></button>
            <button aria-label="镜像 - 绘制轴"><svg class="lg"><use href="#mirror-draw"/></svg></button>
            <button aria-label="移动"><svg class="lg"><use href="#move"/></svg></button>
            <button aria-label="复制"><svg class="lg"><use href="#copy-lg"/></svg></button>
            <button aria-label="旋转"><svg class="lg"><use href="#rotate"/></svg></button>
            <button aria-label="修剪"><svg class="lg"><use href="#trim"/></svg></button>
          </div>
          <div class="small-grid">
            <button aria-label="拆分图元"><svg class="ic"><use href="#split"/></svg></button>
            <button aria-label="用间隙拆分"><svg class="ic"><use href="#split-gap"/></svg></button>
            <button aria-label="解锁"><svg class="ic"><use href="#unpin"/></svg></button>
            <button aria-label="阵列"><svg class="ic"><use href="#array"/></svg></button>
            <button aria-label="缩放"><svg class="ic"><use href="#scale"/></svg></button>
            <button aria-label="锁定"><svg class="ic"><use href="#pin"/></svg></button>
            <button aria-label="修剪单个"><svg class="ic"><use href="#trim1"/></svg></button>
            <button aria-label="修剪多个"><svg class="ic"><use href="#trim2"/></svg></button>
            <button aria-label="删除"><svg class="ic"><use href="#delete"/></svg></button>
          </div>
        </div>
        <h2>修改</h2>
      </div>
      <div class="panel p-view">
        <div class="body">
          <div class="stack first">
            <button aria-label="隐藏"><svg class="ic"><use href="#bulb"/></svg><i class="caret"></i></button>
            <button aria-label="替换"><svg class="ic"><use href="#brush"/></svg><i class="caret"></i></button>
            <button aria-label="选择框"><svg class="ic"><use href="#selbox"/></svg></button>
          </div>
          <div class="stack">
            <button aria-label="置换"><svg class="ic"><use href="#displace"/></svg></button>
            <button aria-label="线处理"><svg class="ic"><use href="#linework"/></svg></button>
          </div>
        </div>
        <h2>视图</h2>
      </div>
      <div class="panel p-measure">
        <div class="body">
          <div class="large-grid">
            <button aria-label="测量"><svg class="lg"><use href="#measure"/></svg><i class="caret"></i></button>
            <button aria-label="尺寸"><svg class="lg"><use href="#radius"/></svg><i class="caret"></i></button>
          </div>
        </div>
        <h2>测量</h2>
      </div>
      <div class="panel p-create">
        <div class="body">
          <div class="large-grid two">
            <button aria-label="部件"><svg class="lg"><use href="#assembly"/></svg></button>
            <button aria-label="组"><svg class="lg"><use href="#group"/></svg></button>
            <button aria-label="零件"><svg class="lg"><use href="#parts"/></svg></button>
            <button aria-label="类似"><svg class="lg"><use href="#similar"/></svg></button>
          </div>
        </div>
        <h2>创建</h2>
      </div>
      <div class="panel p-mode context">
        <div class="body">
          <button class="big"><svg class="lg"><use href="#edit-family"/></svg>编辑<br>族</button>
        </div>
        <h2>模式</h2>
      </div>
      <div class="panel p-column context">
        <div class="body">
          <button class="big"><svg class="lg"><use href="#attach"/></svg>附着<br>顶部/底部</button>
          <button class="big"><svg class="lg"><use href="#detach"/></svg>分离<br>顶部/底部</button>
        </div>
        <h2>修改柱</h2>
      </div>
    </section>

    <div class="options-bar">
      <span>修改 | 结构柱</span>
      <label><input class="check" type="checkbox" checked>随轴网移动</label>
    </div>

    <main class="workspace">
      <aside class="docks">
        <section class="dock properties">
          <div class="dock-title">属性<button aria-label="关闭属性"><svg class="ic16"><use href="#x"/></svg></button></div>
          <button class="type-selector">
            <span class="thumb"><svg><use href="#thumb-col"/></svg></span>
            <span class="type-name">UC-普通柱-柱<br>UC305x305x97</span>
            <i class="caret large"></i>
          </button>
          <div class="filter-row">
            <div class="combo"><select aria-label="类别"><option>结构柱 (1)</option></select></div>
            <button class="edit-type"><svg class="ic16"><use href="#edit-type"/></svg>编辑类型</button>
          </div>
          <div class="grid-wrap">
            <div class="grid-clip">
              <table class="props">
                <colgroup><col class="c-name"><col class="c-value"><col class="c-btn"></colgroup>
                <tbody>
                  <tr class="group"><th colspan="2">约束</th><td><svg class="fold"><use href="#collapse"/></svg></td></tr>
                  <tr><th>底部标高</th><td>标高 1</td><td></td></tr>
                  <tr><th>底部偏移</th><td>0.0</td><td><button class="cell-btn" aria-label="关联底部偏移"></button></td></tr>
                  <tr><th>顶部标高</th><td>标高 2</td><td></td></tr>
                  <tr><th>顶部偏移</th><td>0.0</td><td><button class="cell-btn" aria-label="关联顶部偏移"></button></td></tr>
                  <tr><th>柱样式</th><td>垂直</td><td></td></tr>
                  <tr><th><label for="grid-move">随轴网移动</label></th><td><input class="check" id="grid-move" type="checkbox" checked></td><td></td></tr>
                  <tr class="readonly"><th>柱定位标记</th><td></td><td></td></tr>
                  <tr class="group"><th colspan="2">材质和装饰</th><td><svg class="fold"><use href="#collapse"/></svg></td></tr>
                  <tr><th>结构材质</th><td>金属 - 钢 43...</td><td><button class="cell-btn" aria-label="关联结构材质"></button></td></tr>
                  <tr class="group"><th colspan="2">结构</th><td><svg class="fold"><use href="#collapse"/></svg></td></tr>
                  <tr><th>顶部连接</th><td>无</td><td></td></tr>
                  <tr><th>底部连接</th><td>无</td><td></td></tr>
                  <tr class="group"><th colspan="2"></th><td></td></tr>
                </tbody>
              </table>
            </div>
            <div class="grid-scroll"><i></i></div>
          </div>
          <div class="apply-row"><a href="#">属性帮助</a><button disabled>应用</button></div>
        </section>

        <section class="dock browser">
          <div class="dock-title">项目浏览器 - 项目1<button aria-label="关闭项目浏览器"><svg class="ic16"><use href="#x"/></svg></button></div>
          <div class="tree-box">
            <ul class="tree">
              <li>
                <div class="node"><button class="exp open" aria-label="折叠"></button><i></i><svg class="ic"><use href="#t-views"/></svg><span class="selected">视图 (全部)</span></div>
                <ul>
                  <li class="node"><button class="exp" aria-label="展开"></button><i></i><span>楼层平面</span></li>
                  <li class="node"><button class="exp" aria-label="展开"></button><i></i><span>天花板平面</span></li>
                  <li class="node"><button class="exp" aria-label="展开"></button><i></i><span>三维视图</span></li>
                  <li class="node"><button class="exp" aria-label="展开"></button><i></i><span>立面 (建筑立面)</span></li>
                  <li class="node"><button class="exp" aria-label="展开"></button><i></i><span>面积平面 (人防分区面积)</span></li>
                  <li class="node"><button class="exp" aria-label="展开"></button><i></i><span>面积平面 (净面积)</span></li>
                  <li class="node"><button class="exp" aria-label="展开"></button><i></i><span>面积平面 (总建筑面积)</span></li>
                  <li class="node"><button class="exp" aria-label="展开"></button><i></i><span>面积平面 (防火分区面积)</span></li>
                </ul>
              </li>
              <li class="node leaf"><i></i><svg class="ic"><use href="#t-legend"/></svg><span>图例</span></li>
              <li class="node"><button class="exp" aria-label="展开"></button><i></i><svg class="ic"><use href="#t-sched"/></svg><span>明细表/数量 (全部)</span></li>
              <li class="node leaf"><i></i><svg class="ic"><use href="#t-sheet"/></svg><span>图纸 (全部)</span></li>
              <li class="node"><button class="exp" aria-label="展开"></button><i></i><svg class="ic"><use href="#t-family"/></svg><span>族</span></li>
              <li class="node"><button class="exp" aria-label="展开"></button><i></i><svg class="ic"><use href="#t-group"/></svg><span>组</span></li>
              <li class="node leaf"><i></i><svg class="ic"><use href="#t-link"/></svg><span>Revit 链接</span></li>
            </ul>
          </div>
        </section>
      </aside>

      <section class="view">
        <div class="view-tabs">
          <a class="view-tab" href="#"><svg class="ic"><use href="#plan"/></svg>标高 1</a>
          <a class="view-tab active" href="#"><svg class="ic"><use href="#house"/></svg>{三维}<svg class="ic16"><use href="#x"/></svg></a>
          <i class="caret large"></i>
        </div>
        <div class="view-body">
          <div class="canvas">
            <svg class="scene" viewBox="338 297 2167 1131" preserveAspectRatio="xMidYMid slice">
              <g class="levels">
                <path d="M352 451L660 273"/>
                <path d="M351 748L1160 281"/>
                <path d="M2489 432.500L2200 265.700"/>
                <path d="M2489 730L1640 239.800"/>
              </g>
              <g class="column">
                <path d="M1219 669l20 11v296l-20-11z"/>
                <path d="M1211 685l18-11v297l-18 10z"/>
                <path d="M1201 680l19 10v297l-19-11z"/>
              </g>
            </svg>
            <svg class="viewcube" viewBox="390 50 600 500">
              <defs>
                <linearGradient id="face" x1="0" y1="0" x2="0" y2="1"><stop offset="0" stop-color="#f6f6f6"/><stop offset="1" stop-color="#dcdcdc"/></linearGradient>
                <radialGradient id="shade"><stop offset="0" stop-color="#777"/><stop offset=".5" stop-color="#aaa" stop-opacity=".7"/><stop offset="1" stop-color="#fff" stop-opacity="0"/></radialGradient>
              </defs>
              <path d="M397 350a291 187 0 10582 0a291 187 0 10-582 0zM466 340a222 142 0 10444 0a222 142 0 10-444 0z" fill="#f3f3f3" fill-rule="evenodd" stroke="#c4c4c4" stroke-width="4" stroke-dasharray="6 3"/>
              <ellipse cx="688" cy="335" rx="200" ry="115" fill="url(#shade)"/>
              <g class="compass">
                <text x="464" y="246" transform="rotate(-25 500 220)">西</text>
                <text x="822" y="246" transform="rotate(25 860 220)">北</text>
                <text x="438" y="482" transform="rotate(25 474 456)">南</text>
                <text x="852" y="482" transform="rotate(-25 888 456)">东</text>
              </g>
              <g stroke="#9a9a9a" stroke-width="3">
                <path d="M530 135l157 89v182l-145-98z" fill="url(#face)"/>
                <path d="M844 135l-157 89v182l145-98z" fill="url(#face)"/>
                <path d="M687 58l157 77-157 89-157-89z" fill="#f0f0f0"/>
              </g>
              <path d="M657 207l30-16 30 16v33l-30 18-30-18z" fill="#dfe3e8" opacity=".7"/>
              <g class="faces">
                <text x="565" y="298" transform="rotate(24 607 270)">前</text>
                <text x="722" y="304" transform="rotate(-26 763 270)">右</text>
                <text x="633" y="170" transform="rotate(-30 675 140)">上</text>
              </g>
            </svg>
            <div class="navbar">
              <button class="nav-dot" aria-label="关闭"><svg viewBox="0 0 12 12"><circle cx="6" cy="6" r="6" fill="#bbb"/><path d="M4 4l4 4M8 4L4 8" stroke="#fff" stroke-width="1.500"/></svg></button>
              <button class="nav-wheel" aria-label="控制盘"><svg viewBox="0 0 34 34"><path d="M17 1h16v16a16 16 0 11-16-16z" fill="#eceef1" stroke="#989ca3" stroke-width="1.600"/><circle cx="17" cy="17" r="9" fill="#f7f7f8" stroke="#989ca3" stroke-width="1.600"/><path d="M10 23l-4 4M24 23l4 4M10 25h14" stroke="#989ca3" stroke-width="1.500"/></svg></button>
              <i class="caret dim"></i>
              <hr>
              <button class="nav-zoom" aria-label="缩放"><svg viewBox="0 0 26 26"><path d="M3 3l12 12M15 2L2 15" stroke="#9a9da3" stroke-width="1.500"/><path d="M1 1h5L1 6zM16 1v5l-5-5zM1 16v-5l5 5z" fill="#8d9097"/><circle cx="17" cy="17" r="5" fill="#f0f5f3" stroke="#8d9097" stroke-width="1.600"/><path d="M20 20l5 5" stroke="#8d9097" stroke-width="2.500"/></svg></button>
              <i class="caret dim"></i>
              <button class="nav-dot end" aria-label="选项"><svg viewBox="0 0 12 12"><circle cx="6" cy="6" r="6" fill="#bbb"/><path d="M3 5h6M4 8h4" stroke="#fff" stroke-width="1.500"/></svg></button>
            </div>
          </div>
          <div class="vscroll"><i></i></div>
        </div>
        <div class="view-bar">
          <span class="scale">1 &nbsp;: &nbsp;100</span>
          <button aria-label="详细程度"><svg class="ic"><use href="#v-detail"/></svg></button>
          <button aria-label="视觉样式"><svg class="ic"><use href="#v-style"/></svg></button>
          <button aria-label="日光路径"><svg class="ic"><use href="#v-sun"/></svg></button>
          <button aria-label="阴影"><svg class="ic"><use href="#v-shadow"/></svg></button>
          <button aria-label="渲染"><svg class="ic"><use href="#v-render"/></svg></button>
          <button aria-label="裁剪视图"><svg class="ic"><use href="#v-crop"/></svg></button>
          <button aria-label="显示裁剪区域"><svg class="ic"><use href="#v-cropshow"/></svg></button>
          <button aria-label="锁定三维视图"><svg class="ic"><use href="#v-lock"/></svg></button>
          <button aria-label="临时隐藏"><svg class="ic"><use href="#v-glasses"/></svg></button>
          <button aria-label="显示隐藏图元"><svg class="ic"><use href="#v-bulb"/></svg></button>
          <button aria-label="临时视图属性"><svg class="ic"><use href="#v-reveal"/></svg></button>
          <button aria-label="分析模型"><svg class="ic"><use href="#v-analytic"/></svg></button>
          <button aria-label="位移集"><svg class="ic"><use href="#v-displace"/></svg></button>
          <button aria-label="显示约束"><svg class="ic"><use href="#v-constraint"/></svg></button>
          <div class="hscroll"><i></i></div>
          <svg class="grip" viewBox="0 0 12 12"><path d="M9 0h3v3H9zM5 4h3v3H5zM9 4h3v3H9zM0 9h3v3H0zM5 9h3v3H5zM9 9h3v3H9z" fill="#bbb"/></svg>
        </div>
      </section>
    </main>

    <footer class="status">
      <span class="hint">单击可进行选择; 按 Tab 键并单击可选择其他项目; 按 Ctrl 键并单击可将新项目添加到选择集; 按 Shift 键并单击可取消选择。</span>
      <svg class="ic"><use href="#s-worksets"/></svg>
      <div class="combo"><select aria-label="工作集" disabled><option></option></select></div>
      <svg class="ic"><use href="#s-edit"/></svg>
      <span class="count">:0</span>
      <svg class="ic"><use href="#s-options"/></svg>
      <svg class="ic"><use href="#s-into"/></svg>
      <div class="combo"><select aria-label="设计选项" disabled><option>主模型</option></select></div>
      <div class="select-tools">
        <button aria-label="选择链接"><svg class="ic"><use href="#s-link"/></svg></button>
        <button aria-label="选择基线图元"><svg class="ic"><use href="#s-under"/></svg></button>
        <button aria-label="选择锁定图元"><svg class="ic"><use href="#s-pinned"/></svg></button>
        <button aria-label="按面选择"><svg class="ic"><use href="#s-face"/></svg></button>
        <button aria-label="拖曳图元"><svg class="ic"><use href="#s-drag"/></svg></button>
        <button aria-label="后台进程"><svg class="ic"><use href="#s-gear"/></svg></button>
      </div>
      <button class="filter"><svg class="ic"><use href="#s-filter"/></svg>:1</button>
    </footer>
  </div>

  <!-- floating input method bar -->
  <div class="ime">
    <svg class="ime-logo" viewBox="0 0 36 16"><path d="M0 0h36c0 8-6 13-34 16z" fill="#f4511e"/><path d="M6 7c10 3 18 0 22-7" fill="none" stroke="#fff" stroke-width="4"/></svg>
    <b>英</b>
    <svg class="ime-tools" viewBox="0 0 176 16"><g fill="none" stroke="#0a6fdc" stroke-width="3"><path d="M20 0l-4 5"/><path d="M43 0c2 5 12 5 14 0M48 7h5"/><path d="M78 0v5h18V0M84 0v5"/></g><rect x="115" y="-6" width="12" height="13" rx="2" fill="#b26cf0"/><path d="M150 0h8v7h-8zM161 0h8v7h-8z" fill="#0a6fdc"/></svg>
  </div>
</body>

</html>
```

FILE: styles.css
```css
:root {
  --chrome: #cbcbcb;
  --panel: #eeeeee;
  --green: #e5efd7;
  --pressed: #b7d5f1;
  --pressed-line: #0a63c2;
  --blue: #005fb8;
  --text: #3a3a3a;
  --edge: #a3a3a3;
}

* {
  box-sizing: border-box;
}

body {
  margin: 0;
  background: #adadad;
  color: var(--text);
  font: 18px/24px "Open Sans", "Noto Sans CJK SC", sans-serif;
}

button,
select {
  margin: 0;
  padding: 0;
  border: 0;
  background: none;
  color: inherit;
  font: inherit;
  white-space: nowrap;
}

h1,
h2 {
  margin: 0;
  font-size: 18px;
  font-weight: 400;
}

a {
  color: inherit;
  text-decoration: none;
}

svg {
  display: block;
  flex: none;
}

.sprite {
  position: absolute;
  width: 0;
  height: 0;
}

.ic { width: 24px; height: 24px; }
.ic16 { width: 16px; height: 16px; }
.ic20 { width: 20px; height: 20px; }
.lg { width: 48px; height: 48px; }

.caret {
  display: flex;
  flex: none;
  justify-content: center;
  width: 18px;
}

.caret::before {
  content: "";
  border: 4px solid transparent;
  border-top: 5px solid #333;
  border-bottom: 0;
}

.caret.dim::before { border-top-color: #8a8a8a; }

.caret.large::before {
  border-width: 6px 6px 0;
}

.caret.left::before {
  border: 6px solid transparent;
  border-right-color: #333;
  border-left: 0;
}

/* window frame */
.app {
  display: flex;
  flex-direction: column;
  height: 100vh;
  min-height: 1000px;
  border: 2px solid var(--edge);
  border-bottom-width: 3px;
  border-radius: 12px;
  background: var(--chrome);
  overflow: hidden;
}

.titlebar {
  display: flex;
  align-items: center;
  height: 49px;
  padding: 0 5px 0 3px;
}

.qat,
.account,
.window-buttons {
  display: flex;
  align-items: center;
  flex: none;
}

.tool {
  display: flex;
  align-items: center;
  justify-content: center;
  width: 36px;
  height: 33px;
}

.tool.home { margin-right: 7px; }
.tool.more { width: 28px; }

.tool.letter {
  font: 700 28px/33px Roboto, sans-serif;
}

.pdf {
  fill: #fff;
  font: 700 8px Inter, sans-serif;
}

.pressed {
  border: 1px solid var(--pressed-line);
  background: var(--pressed);
}

.logo {
  display: grid;
  width: 38px;
  place-items: center;
}

.logo svg,
.logo span {
  grid-area: 1 / 1;
}

.logo svg {
  width: 30px;
  height: 34px;
}

.logo span {
  padding-bottom: 8px;
  color: #fff;
  font: 700 18px/24px Roboto, sans-serif;
}

.sep {
  width: 2px;
  height: 33px;
  margin: 0 4px;
  background: #b5b5b5;
}

.sep.wide {
  width: 1px;
  margin: 0 8px;
}

.title {
  flex: 1;
  align-self: flex-start;
  padding: 6px 0 0 48px;
  text-align: center;
  white-space: nowrap;
}

.trial {
  display: flex;
  align-items: center;
  gap: 6px;
  width: 66px;
  height: 33px;
  margin: 0 2px 0 5px;
  padding-left: 8px;
  background: #6360ff;
  color: #fff;
}

.user-name { margin-left: 2px; }

.window-buttons { margin-left: 13px; }

.window-buttons button {
  display: grid;
  width: 37px;
  height: 33px;
  place-items: center;
}

/* ribbon tabs */
.tabs {
  display: flex;
  height: 30px;
  padding-left: 5px;
}

.tabs a {
  padding: 3px 15px;
  white-space: nowrap;
}

.tabs .file {
  margin-right: 5px;
  padding: 3px 16px;
  background: #2a7ab0;
  color: #fff;
}

.tabs .active {
  padding: 3px 13px;
  background: var(--green);
  color: #111;
}

.ribbon-state {
  display: flex;
  align-items: center;
  gap: 2px;
  margin-left: 30px;
}

.ribbon-state svg {
  width: 24px;
  height: 16px;
}

/* ribbon */
.ribbon {
  display: flex;
  gap: 2px;
  padding: 2px 5px 0;
  background: var(--green);
}

.panel {
  display: flex;
  flex-direction: column;
  height: 140px;
  background: var(--panel);
}

.panel h2 {
  display: flex;
  align-items: center;
  justify-content: center;
  gap: 6px;
  height: 27px;
}

.panel .body {
  display: flex;
  flex: 1;
  align-items: flex-start;
  justify-content: center;
  padding-top: 7px;
}

.panel .body button {
  display: flex;
  align-items: center;
}

.panel .body .big {
  flex-direction: column;
  width: 56px;
  line-height: 25px;
}

.big svg { margin-bottom: 7px; }
.big:disabled { color: #a9a9a9; }
.big .caret { margin-top: 3px; }

.stack {
  display: flex;
  flex-direction: column;
  gap: 12px;
  width: 24px;
  margin-top: 3px;
}

.stack button { height: 24px; }

.large-grid {
  display: grid;
  gap: 6px 8px;
}

.large-grid.two { grid-template-columns: 48px 48px; }

.large-grid.four {
  grid-template-columns: repeat(4, 48px);
  column-gap: 10px;
}

.small-grid {
  display: grid;
  grid-template-columns: repeat(3, 24px);
  gap: 12px 14px;
  margin-top: 3px;
}

.p-select { width: 75px; }
.p-select .body { padding: 4px 0 0 2px; }
.p-select h2 { padding-left: 3px; }

.p-select .body .big {
  height: 107px;
  padding-top: 2px;
}

.p-props { width: 66px; }

.p-props .body {
  flex-direction: column;
  align-items: center;
  justify-content: flex-start;
  gap: 3px;
}

.p-props .body .pressed {
  width: 56px;
  height: 52px;
  justify-content: center;
}

.p-clip { width: 112px; }
.p-clip .body { gap: 12px; }
.p-geo { width: 254px; }

.p-geo .body {
  justify-content: flex-start;
  gap: 12px;
  padding-left: 10px;
}

.stack.named { width: 143px; }
.stack.named svg { margin-right: 7px; }
.stack.named .caret { margin-left: 8px; }
.stack .caret { margin-left: 4px; }
.p-ctrl { width: 62px; }
.p-modify { width: 356px; }

.p-modify .body {
  justify-content: flex-start;
  gap: 15px;
  padding-left: 9px;
}

.p-view { width: 96px; }

.p-view .body {
  justify-content: flex-start;
  padding-left: 10px;
}

.stack.first { width: 52px; }
.stack.first .caret { margin-left: 2px; }
.p-measure { width: 81px; }
.p-measure .body { justify-content: flex-start; padding-left: 10px; }
.p-measure .caret { margin-left: 3px; }
.p-create { width: 122px; }
.p-mode { width: 62px; margin-left: 5px; }
.p-column { width: 186px; }
.p-column .body .big { width: 88px; }

.context .body { padding-left: 2px; }

.context h2 {
  margin-left: 2px;
  background: var(--green);
}

.options-bar {
  display: flex;
  align-items: center;
  gap: 40px;
  height: 41px;
  margin: 0 3px;
  padding-left: 13px;
  border-top: 2px solid var(--chrome);
  background: var(--green);
  color: #111;
}

.options-bar label {
  display: flex;
  align-items: center;
  gap: 5px;
}

.check {
  display: grid;
  width: 20px;
  height: 20px;
  margin: 0;
  place-items: center;
  appearance: none;
  border-radius: 4px;
  background: var(--blue);
}

.check::before {
  content: "";
  width: 10px;
  height: 5px;
  margin-bottom: 3px;
  border: solid #fff;
  border-width: 0 0 1px 1px;
  transform: rotate(-45deg);
}

/* docked palettes */
.workspace {
  display: flex;
  flex: 1;
  gap: 3px;
  min-height: 0;
  padding: 3px 3px 0;
}

.docks {
  display: flex;
  flex-direction: column;
  gap: 3px;
  width: 330px;
}

.dock { background: var(--panel); }

.dock-title {
  display: flex;
  align-items: center;
  justify-content: space-between;
  height: 30px;
  padding: 0 6px;
}

.type-selector {
  display: flex;
  align-items: center;
  width: 324px;
  height: 108px;
  margin-left: 3px;
  border: 2px solid var(--chrome);
  text-align: left;
  line-height: 23px;
}

.type-selector .caret {
  width: 14px;
}

.thumb {
  display: grid;
  width: 99px;
  height: 99px;
  margin: 0 6px 0 3px;
  place-items: center;
  border: 1px solid var(--chrome);
  background: #fff;
}

.thumb svg {
  width: 20px;
  height: 96px;
}

.type-name { flex: 1; }

.filter-row {
  display: flex;
  align-items: center;
  gap: 6px;
  margin: 1px 0 2px 3px;
  color: #111;
}

.combo {
  position: relative;
}

.combo select {
  width: 217px;
  height: 31px;
  padding: 0 3px;
  appearance: none;
  border: 1px solid #cfcfcf;
  border-radius: 2px;
  background: #fff;
  opacity: 1;
}

.combo::after {
  content: "";
  position: absolute;
  top: 9px;
  right: 10px;
  width: 7px;
  height: 7px;
  border: solid #777;
  border-width: 0 1px 1px 0;
  transform: rotate(45deg);
  pointer-events: none;
}

.edit-type {
  display: flex;
  align-items: center;
  gap: 5px;
}

.grid-wrap {
  display: flex;
  height: 384px;
  padding-left: 3px;
}

.grid-clip {
  width: 298px;
  overflow: hidden;
}

.props {
  width: 298px;
  table-layout: fixed;
  border-collapse: collapse;
  background: #fff;
  color: #111;
}

.c-name { width: 139px; }
.c-value { width: 140px; }
.c-btn { width: 19px; }

.props th,
.props td {
  height: 29px;
  padding: 0 0 4px 2px;
  border: 1px dotted #777;
  border-left: 0;
  font-weight: 400;
  text-align: left;
  line-height: 24px;
  vertical-align: top;
  white-space: nowrap;
}

.props th { padding-left: 12px; }
.props td:last-child { padding: 0; }

.props .group th,
.props .group td {
  padding: 0 0 0 2px;
  border-width: 0;
  background: #dcdcdc;
  vertical-align: middle;
}

.props .readonly th { color: #777; }
.props .check { margin-top: 3px; }

.fold {
  width: 8px;
  height: 10px;
  margin: 0 0 10px 3px;
}

.cell-btn {
  display: block;
  width: 15px;
  height: 26px;
  margin: 1px;
  border: 1px solid #ccc;
  border-bottom-width: 2px;
  border-radius: 4px;
  background: #fdfdfd;
}

.grid-scroll {
  padding: 26px 0 0 8px;
}

.grid-scroll i {
  display: block;
  width: 11px;
  height: 138px;
  background: #868686;
}

.apply-row {
  display: flex;
  align-items: center;
  justify-content: space-between;
  height: 37px;
  padding: 0 6px 4px 5px;
}

.apply-row a {
  color: #0a63c2;
  text-decoration: underline;
}

.apply-row button {
  width: 110px;
  height: 29px;
  border: 1px solid #e6e6e6;
  border-radius: 4px;
  background: #f8f8f8;
  color: #8a8a8a;
}

.browser {
  display: flex;
  flex: 1;
  flex-direction: column;
  min-height: 0;
}

.tree-box {
  flex: 1;
  margin: 0 3px;
  padding: 0 5px;
  overflow: hidden;
  background: #fff;
  color: #111;
}

/* dotted guide lines run behind the expanders */
.tree,
.tree ul {
  margin: 0;
  padding: 0;
  list-style: none;
  background: repeating-linear-gradient(#999 0 1px, transparent 1px 3px) 7px 13px / 1px calc(100% - 26px) no-repeat;
}

.tree ul {
  margin-left: 30px;
  background-position: 7px 0;
}

.node {
  display: flex;
  align-items: center;
  height: 26px;
}

.node i {
  width: 10px;
  border-top: 1px dotted #999;
}

.leaf i {
  width: 17px;
  margin-left: 8px;
}

.node span {
  padding: 0 3px;
  margin-left: 3px;
  white-space: nowrap;
}

.node .selected { background: #e3e3e3; }

.exp {
  display: grid;
  width: 15px;
  height: 15px;
  place-items: center;
  border: 1px solid #8f8f8f;
  background: linear-gradient(#2f4f9e, #2f4f9e) center / 9px 1px no-repeat, linear-gradient(#2f4f9e, #2f4f9e) center / 1px 9px no-repeat, linear-gradient(#fff, #ddd);
}

.exp.open {
  background: linear-gradient(#2f4f9e, #2f4f9e) center / 9px 1px no-repeat, linear-gradient(#fff, #ddd);
}

/* drawing view */
.view {
  display: flex;
  flex: 1;
  flex-direction: column;
  min-width: 0;
}

.view-tabs {
  display: flex;
  align-items: center;
  height: 30px;
}

.view-tab {
  display: flex;
  align-items: center;
  gap: 11px;
  width: 192px;
  height: 30px;
  padding-left: 7px;
}

.view-tab.active {
  padding: 0 7px;
  background: #fafafa;
  color: #111;
  font-weight: 600;
}

.view-tab .ic16 { margin-left: auto; }
.view-tabs > .caret { margin: 0 3px 0 auto; }

.view-body {
  display: flex;
  flex: 1;
  min-height: 0;
}

.canvas {
  position: relative;
  flex: 1;
  background: #fff;
  overflow: hidden;
}

.scene {
  width: 100%;
  height: 100%;
}

.levels {
  fill: none;
  stroke: #777;
  stroke-dasharray: 89 44.5 44.5 44.5;
}

.column {
  fill: #4c76d0;
  fill-opacity: .7;
  stroke: #0436b8;
  stroke-width: 1.5;
}

.viewcube {
  position: absolute;
  top: 80px;
  right: 35px;
  width: 200px;
  height: 167px;
}

.compass {
  fill: #d3d3d3;
  stroke: #a8a8a8;
  stroke-width: 2;
  font-size: 72px;
}

.faces {
  fill: #9a9ea4;
  font-size: 84px;
}

.navbar {
  position: absolute;
  top: 259px;
  right: 2px;
  display: flex;
  flex-direction: column;
  align-items: center;
  width: 49px;
  height: 167px;
  padding: 3px;
  border: 1px solid #bdbdbd;
  border-radius: 5px;
  background: rgba(240, 240, 240, .75);
}

.nav-dot {
  width: 12px;
  height: 12px;
  align-self: flex-end;
}

.nav-wheel {
  width: 34px;
  height: 34px;
  margin: 11px 0;
}

.navbar hr {
  width: 40px;
  margin: 5px 0 11px;
  border: 0;
  border-top: 1px solid #bdbdbd;
}

.nav-zoom {
  width: 26px;
  height: 26px;
  margin-bottom: 14px;
}

.nav-dot.end { margin-top: auto; }

.vscroll {
  width: 25px;
  background: #efefef;
}

.vscroll i {
  display: block;
  width: 12px;
  height: 26px;
  margin: 554px 0 0 7px;
  background: #868686;
}

.view-bar {
  display: flex;
  align-items: center;
  gap: 8px;
  height: 29px;
  padding: 0 3px 0 36px;
  border-bottom: 3px solid #fff;
  background: #efefef;
}

.scale {
  width: 79px;
  color: #111;
  font-size: 17px;
  white-space: nowrap;
}

.hscroll { flex: 1; }

.hscroll i {
  display: block;
  width: 26px;
  height: 11px;
  margin-left: 49%;
  background: #868686;
}

.grip {
  width: 12px;
  height: 12px;
}

/* status bar */
.status {
  display: flex;
  align-items: center;
  height: 37px;
  padding-left: 5px;
  color: #111;
}

.hint {
  width: 1125px;
  white-space: nowrap;
}

.status .combo {
  margin: 0 9px;
}

.status .combo select {
  width: 306px;
  height: 27px;
  color: #777;
}

.status .combo::after { border-color: #aaa; }

.count {
  width: 36px;
  margin-left: 8px;
}

.count + .ic { margin-right: 11px; }

.select-tools {
  display: flex;
  gap: 12px;
  margin-left: auto;
}

.select-tools button {
  display: flex;
}

.filter {
  display: flex;
  align-items: center;
  gap: 3px;
  margin: 0 98px 0 6px;
}

/* input method bar lying over the window corner */
.ime {
  position: absolute;
  top: 0;
  left: 32px;
  display: flex;
  width: 255px;
  height: 16px;
  border: solid #bcd3ee;
  border-width: 0 1px 1px 0;
  background: #fff;
}

.ime-logo {
  width: 36px;
  height: 16px;
}

.ime b {
  width: 42px;
  padding-left: 12px;
  color: #0a6fdc;
  font-size: 14px;
  line-height: 14px;
}

.ime-tools {
  width: 176px;
  height: 16px;
}
```
